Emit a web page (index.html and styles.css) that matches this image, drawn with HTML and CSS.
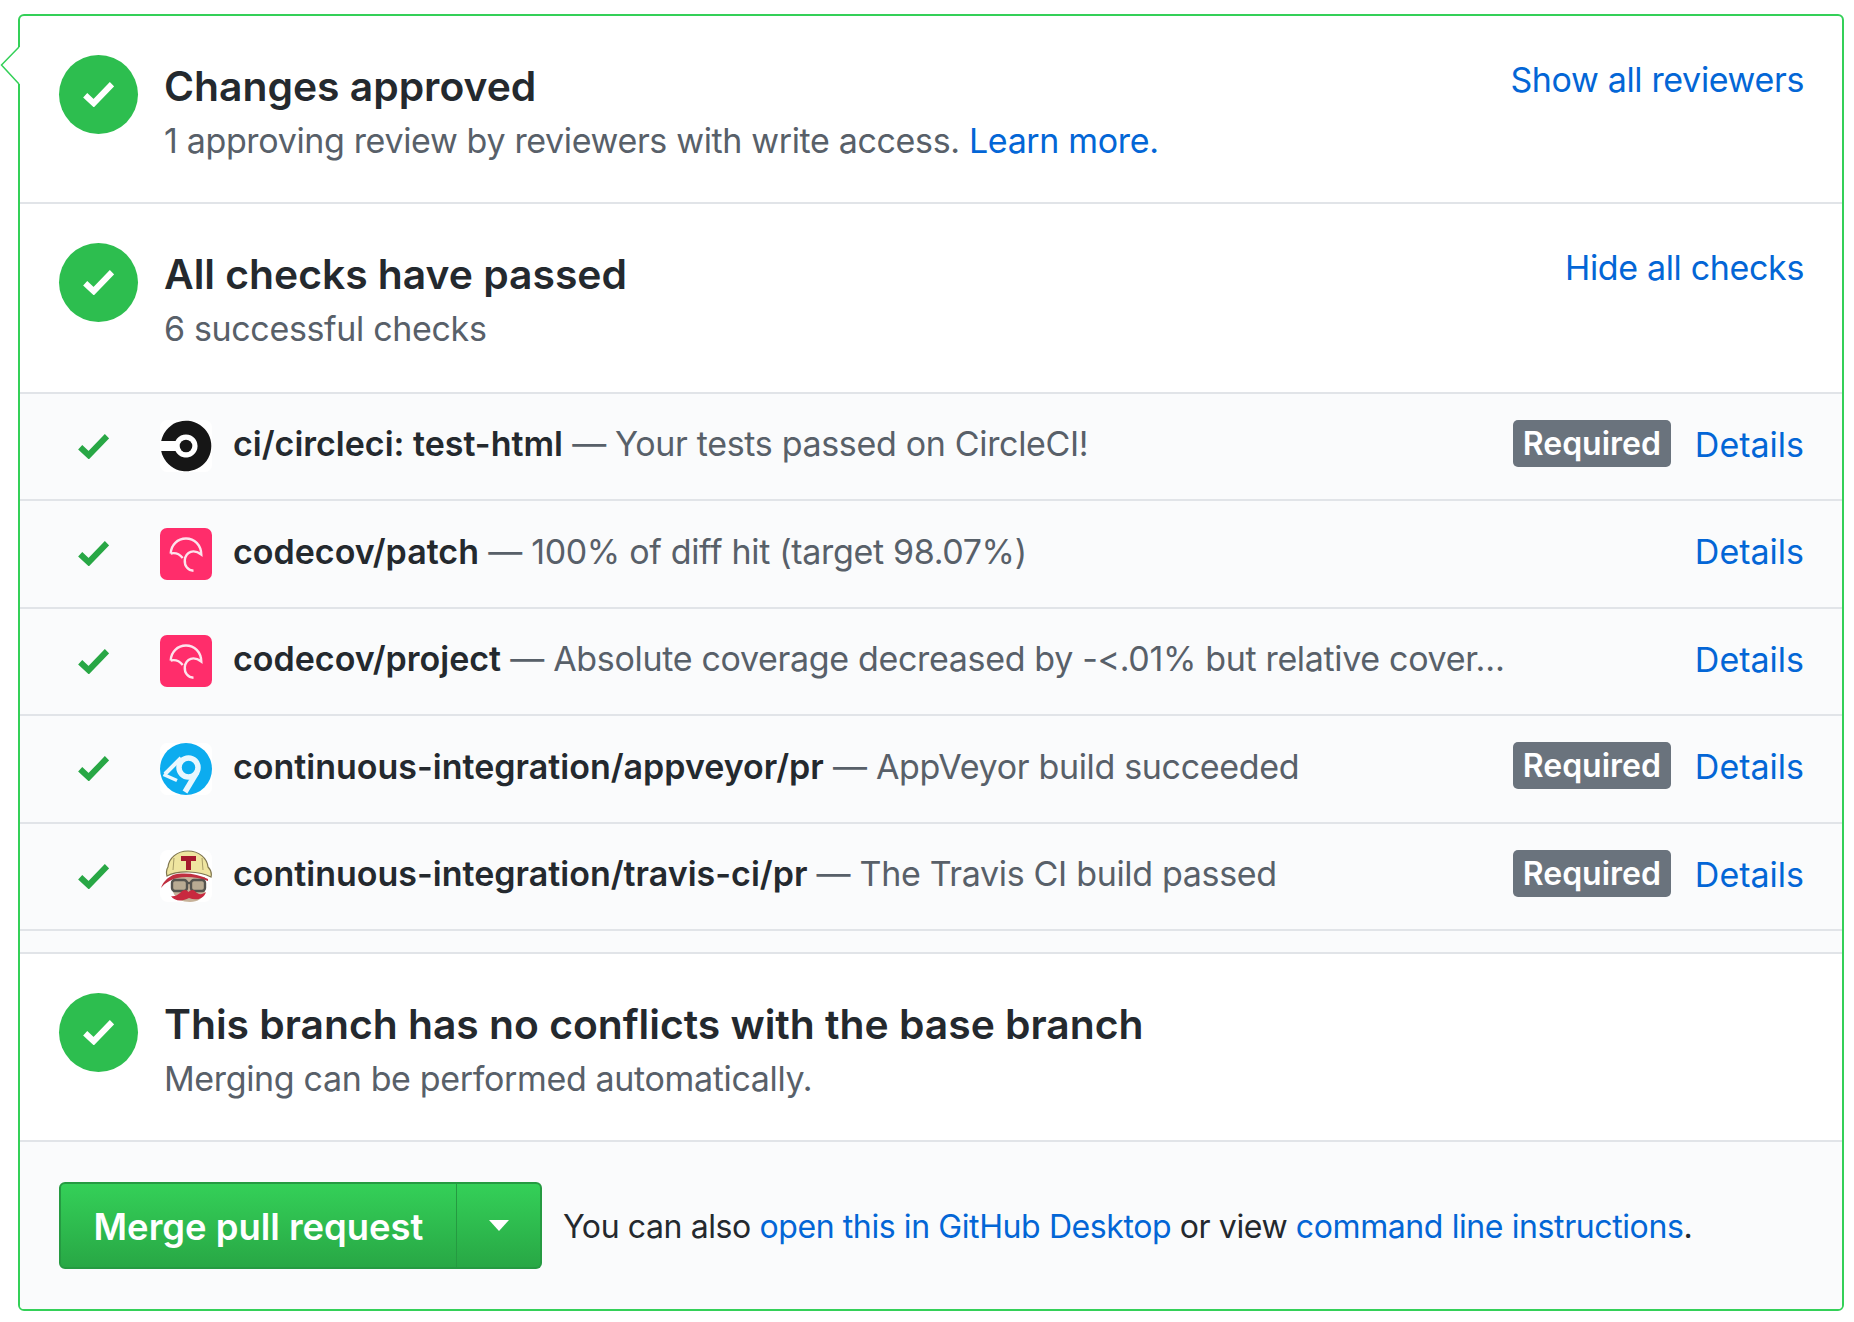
FILE: index.html
```html
<!DOCTYPE html>
<html lang="en">
<head>
<meta charset="utf-8">
<title>Merge status</title>
<link rel="stylesheet" href="styles.css">
</head>
<body>
<svg class="defs" width="0" height="0" aria-hidden="true">
  <defs>
    <symbol id="check" viewBox="0 0 31 25"><path d="M2.200 13.200 10.700 21.200 29 2.200" fill="none" stroke="currentColor" stroke-width="6"/></symbol>
    <symbol id="codecov" viewBox="0 0 52 52">
      <rect width="52" height="52" rx="7" fill="#ff2d6b"/>
      <path d="M10.700 25.500C11 17 17.500 10.500 26 10.500C34.500 10.500 41 17 41.300 26.500C34 21 26 23 24.800 32C24.300 38 28 42.500 33.500 42.700" fill="none" stroke="#fde3ec" stroke-width="2.400"/>
      <path d="M10.700 25.500C15 24.500 19.500 26 22.700 30" fill="none" stroke="#fde3ec" stroke-width="2.400"/>
    </symbol>
  </defs>
</svg>
<main class="merge-box">
  <svg class="caret" width="21" height="40" viewBox="0 0 21 40" aria-hidden="true">
    <path d="M21 1H19L1.500 19 19 38H21Z" fill="#fff"/>
    <path d="M19 1 1.500 19 19 38" fill="none" stroke="#34d058" stroke-width="1.500"/>
  </svg>

  <section class="status status-first">
    <span class="status-icon"><svg width="31" height="25"><use href="#check"/></svg></span>
    <div class="status-body">
      <h3 class="status-title">Changes approved</h3>
      <p class="status-sub">1 approving review by reviewers with write access. <a href="#">Learn more.</a></p>
    </div>
    <a class="status-toggle" href="#">Show all reviewers</a>
  </section>

  <section class="status status-second">
    <span class="status-icon"><svg width="31" height="25"><use href="#check"/></svg></span>
    <div class="status-body">
      <h3 class="status-title">All checks have passed</h3>
      <p class="status-sub">6 successful checks</p>
    </div>
    <a class="status-toggle" href="#">Hide all checks</a>
  </section>

  <div class="checks">
    <div class="check-row">
      <svg class="row-check" width="31" height="25"><use href="#check"/></svg>
      <svg class="avatar" width="52" height="52" viewBox="0 0 52 52">
        <rect width="52" height="52" rx="7" fill="#fff"/>
        <path d="M1.200 21A25.300 25.300 0 1 1 1.200 31H15.500A11.600 11.600 0 1 0 15.500 21Z" fill="#161616"/>
        <circle cx="26" cy="26" r="6.300" fill="#161616"/>
      </svg>
      <p class="check-text"><strong>ci/circleci: test-html</strong> — Your tests passed on CircleCI!</p>
      <div class="check-side"><span class="badge">Required</span><a href="#">Details</a></div>
    </div>
    <div class="check-row">
      <svg class="row-check" width="31" height="25"><use href="#check"/></svg>
      <svg class="avatar" width="52" height="52"><use href="#codecov"/></svg>
      <p class="check-text"><strong>codecov/patch</strong> — 100% of diff hit (target 98.07%)</p>
      <div class="check-side"><a href="#">Details</a></div>
    </div>
    <div class="check-row">
      <svg class="row-check" width="31" height="25"><use href="#check"/></svg>
      <svg class="avatar" width="52" height="52"><use href="#codecov"/></svg>
      <p class="check-text"><strong>codecov/project</strong> — Absolute coverage decreased by -&lt;.01% but relative cover…</p>
      <div class="check-side"><a href="#">Details</a></div>
    </div>
    <div class="check-row">
      <svg class="row-check" width="31" height="25"><use href="#check"/></svg>
      <svg class="avatar" width="52" height="52" viewBox="0 0 52 52">
        <rect width="52" height="52" rx="7" fill="#fff"/>
        <circle cx="26" cy="26" r="26" fill="#0cacef"/>
        <circle cx="28.500" cy="24.500" r="9.500" fill="none" stroke="#eaf7fe" stroke-width="5.500"/>
        <path d="M21 15 5 31" fill="none" stroke="#eaf7fe" stroke-width="4"/>
        <path d="M3.500 31.500 17 37.500" fill="none" stroke="#eaf7fe" stroke-width="3.500"/>
        <path d="M37 29 25 49" fill="none" stroke="#eaf7fe" stroke-width="5.500"/>
      </svg>
      <p class="check-text"><strong>continuous-integration/appveyor/pr</strong> — AppVeyor build succeeded</p>
      <div class="check-side"><span class="badge">Required</span><a href="#">Details</a></div>
    </div>
    <div class="check-row">
      <svg class="row-check" width="31" height="25"><use href="#check"/></svg>
      <svg class="avatar" width="52" height="52" viewBox="0 0 52 52">
        <rect width="52" height="52" rx="8" fill="#fff"/>
        <path d="M13 27V42C16 49 22 52 30 52C38 52 43 48 45 42V27Z" fill="#c6b299"/>
        <path d="M7 26C6 22 6.500 19 8 17C9 8 17 1 28 1C39 1 47 8 48 17C51 20 52 23 51 27C40 21 18 20 7 26Z" fill="#efe5a0" stroke="#7f7650" stroke-width="1.200"/>
        <path d="M14 8 13 20M42 8 43 20" stroke="#a89d68" stroke-width="1"/>
        <path d="M21 6H36V11H31V20H26V11H21Z" fill="#a6192e"/>
        <path d="M1 38C3 32 7 28 13 25C24 22 38 24 48 29V31C38 27 26 26 17 28C10 30 5 33 1 38Z" fill="#c02f40"/>
        <rect x="12" y="30" width="15" height="11" rx="3" fill="#b9ab93" stroke="#55544f" stroke-width="2.400"/>
        <rect x="31" y="30" width="14" height="11" rx="3" fill="#b9ab93" stroke="#55544f" stroke-width="2.400"/>
        <path d="M26 33H32" stroke="#55544f" stroke-width="2.400"/>
        <path d="M11 46C16 47 19 44 22 41C25 39 27 40 28.500 42C30 40 33 39 35 41C38 45 42 45 46 42C44 49 36 51 29 48C22 52 14 51 11 46Z" fill="#c8293f"/>
      </svg>
      <p class="check-text"><strong>continuous-integration/travis-ci/pr</strong> — The Travis CI build passed</p>
      <div class="check-side"><span class="badge">Required</span><a href="#">Details</a></div>
    </div>
  </div>

  <section class="status status-last">
    <span class="status-icon"><svg width="31" height="25"><use href="#check"/></svg></span>
    <div class="status-body">
      <h3 class="status-title">This branch has no conflicts with the base branch</h3>
      <p class="status-sub">Merging can be performed automatically.</p>
    </div>
  </section>

  <footer class="merge-footer">
    <div class="btn-group">
      <button class="btn-merge" type="button">Merge pull request</button>
      <button class="btn-caret" type="button" aria-label="Merge options"><span class="tri"></span></button>
    </div>
    <p class="footer-text">You can also <a href="#">open this in GitHub Desktop</a> or view <a href="#">command line instructions</a>.</p>
  </footer>
</main>
</body>
</html>
```

FILE: styles.css
```css
* { box-sizing: border-box; }
html, body { margin: 0; background: #fff; }
body {
  padding: 14px 10px 0 18px;
  font-family: Inter, "Liberation Sans", sans-serif;
  color: #24292e;
}
.defs { position: absolute; }
a { color: #0366d6; text-decoration: none; }
p, h3 { margin: 0; }

.merge-box {
  position: relative;
  width: 1826px;
  height: 1297px;
  border: 2px solid #34d058;
  border-radius: 6px;
  display: flex;
  flex-direction: column;
}
.caret { position: absolute; left: -20px; top: 30px; }

.status {
  flex: none;
  display: flex;
  align-items: flex-start;
  padding: 39px 38px 0 39px;
  border-bottom: 2px solid #e1e4e8;
}
.status-first { height: 188px; }
.status-second { height: 189.5px; }
.status-last { height: 188px; }
.status-icon {
  width: 79px;
  height: 79px;
  border-radius: 50%;
  background: #2dbe4f;
  color: #fff;
  display: flex;
  align-items: center;
  justify-content: center;
  flex: none;
}
.status-body { margin-left: 26px; flex: 1; }
.status-title { font-size: 40.8px; line-height: 62px; font-weight: 600; }
.status-sub { font-size: 34px; line-height: 48px; color: #586069; letter-spacing: -0.35px; }
.status-toggle { font-size: 34px; line-height: 48px; margin-top: 1px; letter-spacing: -0.35px; }

.checks {
  flex: none;
  height: 560.5px;
  background: #fafbfc;
  border-bottom: 2px solid #e1e4e8;
}
.check-row {
  height: 107.5px;
  display: flex;
  align-items: center;
  padding: 0 38px 0 58px;
  border-bottom: 2px solid #e1e4e8;
}
.row-check { color: #28a745; flex: none; }
.avatar { flex: none; margin-left: 51px; }
.check-text {
  flex: 1;
  min-width: 0;
  margin: 0 0 4px 21px;
  font-size: 34px;
  line-height: 48px;
  color: #586069;
  letter-spacing: -0.33px;
  white-space: nowrap;
}
.check-text strong { color: #24292e; font-weight: 600; letter-spacing: 0; }
.check-side {
  flex: none;
  width: 299px;
  display: flex;
  align-items: center;
  justify-content: flex-end;
  gap: 24px;
  font-size: 34px;
  line-height: 48px;
  margin-bottom: 3px;
}
.badge {
  width: 158px;
  height: 47px;
  margin-bottom: 3px;
  border-radius: 5px;
  background: #6a737d;
  color: #fff;
  font-weight: 600;
  font-size: 32px;
  line-height: 47px;
  text-align: center;
}

.merge-footer {
  flex: 1;
  background: #fafbfc;
  border-radius: 0 0 4px 4px;
  display: flex;
  align-items: center;
  padding: 0 39px;
}
.btn-group { display: flex; height: 87px; flex: none; }
.btn-merge, .btn-caret {
  border: 2px solid #259a41;
  background: linear-gradient(#34d058, #28a745);
  color: #fff;
  font-family: inherit;
  font-weight: 600;
}
.btn-merge {
  width: 398px;
  padding: 2px 0 0;
  font-size: 36.4px;
  border-radius: 6px 0 0 6px;
  border-right-width: 1px;
}
.btn-caret {
  width: 85px;
  padding: 0;
  border-radius: 0 6px 6px 0;
  border-left: 0;
  display: flex;
  align-items: center;
  justify-content: center;
}
.tri {
  width: 0;
  height: 0;
  border-left: 10px solid transparent;
  border-right: 10px solid transparent;
  border-top: 11px solid #fff;
}
.footer-text { margin: 2px 0 0 21px; font-size: 32px; line-height: 48px; letter-spacing: -0.4px; }
```
